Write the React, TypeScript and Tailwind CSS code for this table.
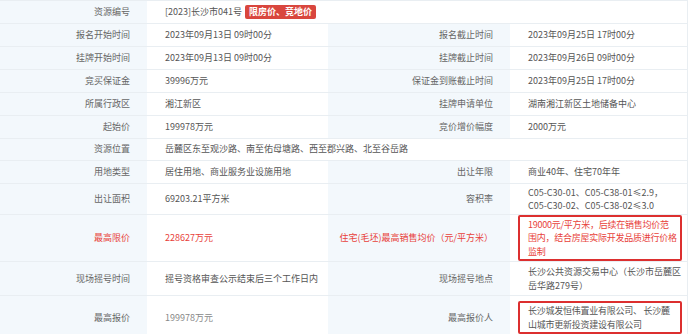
import React from "react";

type Cell = {
  label: string;
  value?: React.ReactNode;
  red?: boolean;
  muted?: boolean;
  span?: boolean;
};

type Row = {
  h: string;
  left: Cell;
  right?: Cell;
};

const RedBox = ({ lines, red }: { lines: string[]; red?: boolean }) => (
  <div
    className={`border-2 border-[#dc2f2f] rounded-[2px] pl-[8px] py-[1px] -ml-[10px] w-[164px] leading-[13.5px] tracking-[-0.25px] ${
      red ? "text-[#e8413a]" : "text-[#555]"
    }`}
  >
    {lines.map((l) => (
      <div key={l} className="whitespace-nowrap">
        {l}
      </div>
    ))}
  </div>
);

const rows: Row[] = [
  {
    h: "h-[23px]",
    left: {
      label: "资源编号",
      span: true,
      value: (
        <span className="flex items-center">
          [2023]长沙市041号
          <span className="ml-[3px] bg-[#d9463e] text-white rounded-[2px] px-[4px] h-[14px] leading-[14px] font-bold">
            限房价、竞地价
          </span>
        </span>
      ),
    },
  },
  {
    h: "h-[23px]",
    left: { label: "报名开始时间", value: "2023年09月13日 09时00分" },
    right: { label: "报名截止时间", value: "2023年09月25日 17时00分" },
  },
  {
    h: "h-[23px]",
    left: { label: "挂牌开始时间", value: "2023年09月13日 09时00分" },
    right: { label: "挂牌截止时间", value: "2023年09月26日 09时00分" },
  },
  {
    h: "h-[23px]",
    left: { label: "竞买保证金", value: "39996万元" },
    right: { label: "保证金到账截止时间", value: "2023年09月25日 17时00分" },
  },
  {
    h: "h-[23px]",
    left: { label: "所属行政区", value: "湘江新区" },
    right: { label: "挂牌申请单位", value: "湖南湘江新区土地储备中心" },
  },
  {
    h: "h-[23px]",
    left: { label: "起始价", value: "199978万元" },
    right: { label: "竞价增价幅度", value: "2000万元" },
  },
  {
    h: "h-[22px]",
    left: {
      label: "资源位置",
      span: true,
      value: "岳麓区东至观沙路、南至佑母塘路、西至郡兴路、北至谷岳路",
    },
  },
  {
    h: "h-[23px]",
    left: { label: "用地类型", value: "居住用地、商业服务业设施用地" },
    right: { label: "出让年限", value: "商业40年、住宅70年年" },
  },
  {
    h: "h-[31px]",
    left: { label: "出让面积", value: "69203.21平方米" },
    right: {
      label: "容积率",
      value: (
        <div className="leading-[13px]">
          <div>C05-C30-01、C05-C38-01≤2.9，</div>
          <div>C05-C30-02、C05-C38-02≤3.0</div>
        </div>
      ),
    },
  },
  {
    h: "h-[44px]",
    left: { label: "最高限价", value: "228627万元", red: true },
    right: {
      label: "住宅(毛坯)最高销售均价（元/平方米）",
      red: true,
      value: (
        <RedBox
          red
          lines={[
            "19000元/平方米，后续在销售均价范",
            "围内，结合房屋实际开发品质进行价格",
            "监制",
          ]}
        />
      ),
    },
  },
  {
    h: "h-[34px]",
    left: { label: "现场摇号时间", value: "摇号资格审查公示结束后三个工作日内" },
    right: {
      label: "现场摇号地点",
      value: (
        <div className="leading-[13.5px]">
          <div>长沙公共资源交易中心（长沙市岳麓区</div>
          <div>岳华路279号）</div>
        </div>
      ),
    },
  },
  {
    h: "h-[44px]",
    left: { label: "最高报价", value: "199978万元", muted: true },
    right: {
      label: "最高报价人",
      value: (
        <RedBox
          lines={["长沙城发恒伟置业有限公司、 长沙麓", "山城市更新投资建设有限公司"]}
        />
      ),
    },
  },
];

const labelCls =
  "bg-[#f3f8fc] text-right pr-[17px] pl-2 border-b border-[#e9eef2] whitespace-nowrap";
const valueCls = "pl-[18px] pr-1 border-b border-[#e9eef2] bg-white";

export default function App() {
  return (
    <div
      className="w-[692px] h-[334px] overflow-hidden bg-white text-[9px] text-[#555]"
      style={{ fontFamily: '"Noto Sans CJK SC", "Noto Sans", sans-serif' }}
    >
      <table className="w-[687px] table-fixed border-collapse border-r border-[#e9eef2] -mt-px">
        <colgroup>
          <col className="w-[147px]" />
          <col className="w-[181px]" />
          <col className="w-[182px]" />
          <col className="w-[177px]" />
        </colgroup>
        <tbody>
          <tr>
            <td colSpan={4} className="h-px border-b border-[#e9eef2]" />
          </tr>
          {rows.map((r) => (
            <tr key={r.left.label}>
              <td
                className={`${labelCls} ${r.h} ${
                  r.left.red ? "text-[#e8413a]" : "text-[#666]"
                }`}
              >
                {r.left.label}
              </td>
              <td
                colSpan={r.left.span ? 3 : 1}
                className={`${valueCls} ${
                  r.left.red
                    ? "text-[#e8413a]"
                    : r.left.muted
                    ? "text-[#888]"
                    : "text-[#555]"
                }`}
              >
                {r.left.value}
              </td>
              {r.right && (
                <>
                  <td
                    className={`${labelCls} ${
                      r.right.red ? "text-[#e8413a]" : "text-[#666]"
                    }`}
                  >
                    {r.right.label}
                  </td>
                  <td className={valueCls}>{r.right.value}</td>
                </>
              )}
            </tr>
          ))}
        </tbody>
      </table>
    </div>
  );
}
